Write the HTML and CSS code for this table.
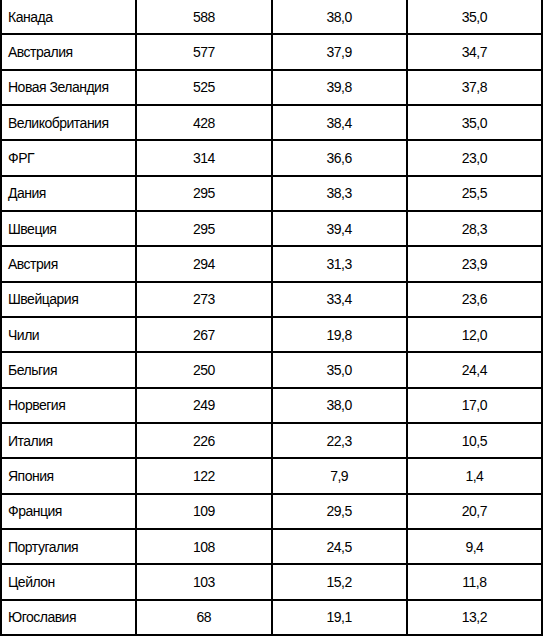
FILE: index.html
```html
<!DOCTYPE html>
<html lang="ru">
<head>
<meta charset="utf-8">
<link rel="stylesheet" href="styles.css">
</head>
<body>
<table class="data">
<tbody>
<tr><td class="name">Канада</td><td>588</td><td>38,0</td><td>35,0</td></tr>
<tr><td class="name">Австралия</td><td>577</td><td>37,9</td><td>34,7</td></tr>
<tr><td class="name">Новая Зеландия</td><td>525</td><td>39,8</td><td>37,8</td></tr>
<tr><td class="name">Великобритания</td><td>428</td><td>38,4</td><td>35,0</td></tr>
<tr><td class="name">ФРГ</td><td>314</td><td>36,6</td><td>23,0</td></tr>
<tr><td class="name">Дания</td><td>295</td><td>38,3</td><td>25,5</td></tr>
<tr><td class="name">Швеция</td><td>295</td><td>39,4</td><td>28,3</td></tr>
<tr><td class="name">Австрия</td><td>294</td><td>31,3</td><td>23,9</td></tr>
<tr><td class="name">Швейцария</td><td>273</td><td>33,4</td><td>23,6</td></tr>
<tr><td class="name">Чили</td><td>267</td><td>19,8</td><td>12,0</td></tr>
<tr><td class="name">Бельгия</td><td>250</td><td>35,0</td><td>24,4</td></tr>
<tr><td class="name">Норвегия</td><td>249</td><td>38,0</td><td>17,0</td></tr>
<tr><td class="name">Италия</td><td>226</td><td>22,3</td><td>10,5</td></tr>
<tr><td class="name">Япония</td><td>122</td><td>7,9</td><td>1,4</td></tr>
<tr><td class="name">Франция</td><td>109</td><td>29,5</td><td>20,7</td></tr>
<tr><td class="name">Португалия</td><td>108</td><td>24,5</td><td>9,4</td></tr>
<tr><td class="name">Цейлон</td><td>103</td><td>15,2</td><td>11,8</td></tr>
<tr><td class="name">Югославия</td><td>68</td><td>19,1</td><td>13,2</td></tr>
</tbody>
</table>
</body>
</html>
```
FILE: styles.css
```css
html, body {
  margin: 0;
  padding: 0;
  background: #fff;
}
body {
  font-family: "Liberation Sans", Arial, sans-serif;
  font-size: 14px;
  color: #000;
}
.data {
  border-collapse: collapse;
  table-layout: fixed;
  width: 543px;
  height: 638px;
  margin-top: -2px;
}
.data td {
  border: 2px solid #000;
  text-align: center;
  vertical-align: middle;
  padding: 0 6px;
  letter-spacing: -0.5px;
  white-space: nowrap;
  line-height: 16px;
}
.data td.name {
  text-align: left;
  padding-left: 6px;
}
```
